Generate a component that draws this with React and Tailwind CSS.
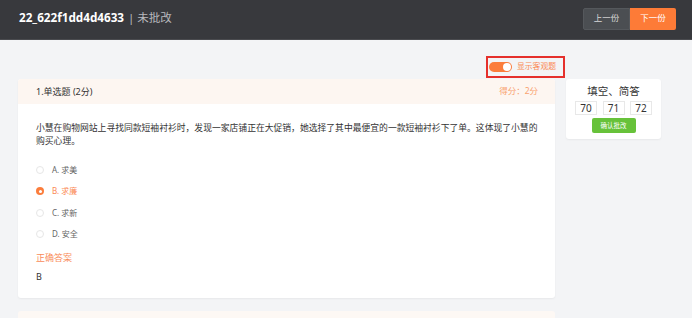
import React from "react";

const font = { fontFamily: '"Noto Sans", "Noto Sans CJK SC", sans-serif' };

function Radio({ checked }) {
  return checked ? (
    <span className="w-[8px] h-[8px] rounded-full bg-[#fb7d3c] flex items-center justify-center">
      <span className="w-[3px] h-[3px] rounded-full bg-white" />
    </span>
  ) : (
    <span className="w-[8px] h-[8px] rounded-full border border-[#e6e6e6] bg-white" />
  );
}

export default function App() {
  const options = [
    { k: "A. 求美", c: false },
    { k: "B. 求廉", c: true },
    { k: "C. 求新", c: false },
    { k: "D. 安全", c: false },
  ];
  return (
    <div className="w-[692px] h-[318px] overflow-hidden bg-[#f3f4f6]" style={font}>
      <div className="h-[40px] bg-[#38393d] border-b border-[#4a4b4f] flex items-center justify-between pl-[19px] pr-[16px] pb-[4px]">
        <div className="flex items-center leading-none">
          <span className="font-bold text-white text-[11.7px]">22_622f1dd4d4633</span>
          <span className="text-[#b9babd] ml-[4px] text-[11.5px]">| 未批改</span>
        </div>
        <div className="flex mt-[2px]">
          <div className="w-[47px] h-[22px] bg-[#4b4e52] border border-[#55585c] rounded-l-[2px] flex items-center justify-center text-[8.5px] text-[#d8d8d8]">上一份</div>
          <div className="w-[46px] h-[22px] bg-[#fd7b37] rounded-r-[2px] flex items-center justify-center text-[8.5px] text-white">下一份</div>
        </div>
      </div>

      <div className="px-[18px]">
        <div className="w-[547px] flex justify-end pt-[16px]">
          <div className="h-[22px] w-[79px] border-2 border-[#e5302c] flex items-center pl-px">
            <span className="w-[23px] h-[10px] rounded-full bg-[#fb7d3c] flex items-center justify-end pr-[1px]">
              <span className="w-[8px] h-[8px] rounded-full bg-white" />
            </span>
            <span className="ml-[5px] text-[7.8px] text-[#fb8a55] leading-none">显示客观题</span>
          </div>
        </div>

        <div className="flex gap-[11px] mt-px items-start">
          <div className="w-[537px] flex flex-col">
            <div className="bg-white rounded-[3px] shadow-[0_1px_2px_rgba(0,0,0,0.05)] overflow-hidden">
              <div className="h-[25px] bg-[#fdf6f1] flex items-center justify-between pl-[18px] pr-[17px]">
                <span className="text-[9px] text-[#333]">1.单选题 (2分)</span>
                <span className="text-[8.5px] text-[#f9a26f]">得分：2分</span>
              </div>
              <div className="px-[18px] pt-[18px] pb-[15px]">
                <p className="text-[8.8px] leading-[13px] text-[#333] whitespace-nowrap">
                  小慧在购物网站上寻找同款短袖衬衫时，发现一家店铺正在大促销，她选择了其中最便宜的一款短袖衬衫下了单。这体现了小慧的
                  <br />
                  购买心理。
                </p>
                <div className="mt-[11px]">
                  {options.map((o) => (
                    <div key={o.k} className="h-[21.5px] flex items-center">
                      <Radio checked={o.c} />
                      <span className={"ml-[8px] text-[8px] " + (o.c ? "text-[#fb8a55]" : "text-[#666]")}>{o.k}</span>
                    </div>
                  ))}
                </div>
                <div className="mt-[6px] text-[9px] leading-[13px] text-[#f98c5a]">正确答案</div>
                <div className="mt-[6px] text-[9px] leading-[13px] text-[#333]">B</div>
              </div>
            </div>
            <div className="mt-[13px] h-[40px] bg-[#fdf8f4] rounded-t-[3px]" />
          </div>

          <div className="w-[95px] bg-white rounded-[3px] shadow-[0_1px_2px_rgba(0,0,0,0.05)] flex flex-col items-center pt-[5px] pb-[6px]">
            <div className="text-[10.5px] leading-[14px] text-[#333]">填空、简答</div>
            <div className="flex gap-[5.5px] mt-[3px]">
              {["70", "71", "72"].map((n) => (
                <div key={n} className="w-[22px] h-[14px] border border-[#e8e8e8] flex items-center justify-center text-[10px] text-[#333]">{n}</div>
              ))}
            </div>
            <div className="mt-[3px] w-[44px] h-[15px] bg-[#67c23a] rounded-[2px] flex items-center justify-center text-[6.5px] text-white">确认批改</div>
          </div>
        </div>
      </div>
    </div>
  );
}
